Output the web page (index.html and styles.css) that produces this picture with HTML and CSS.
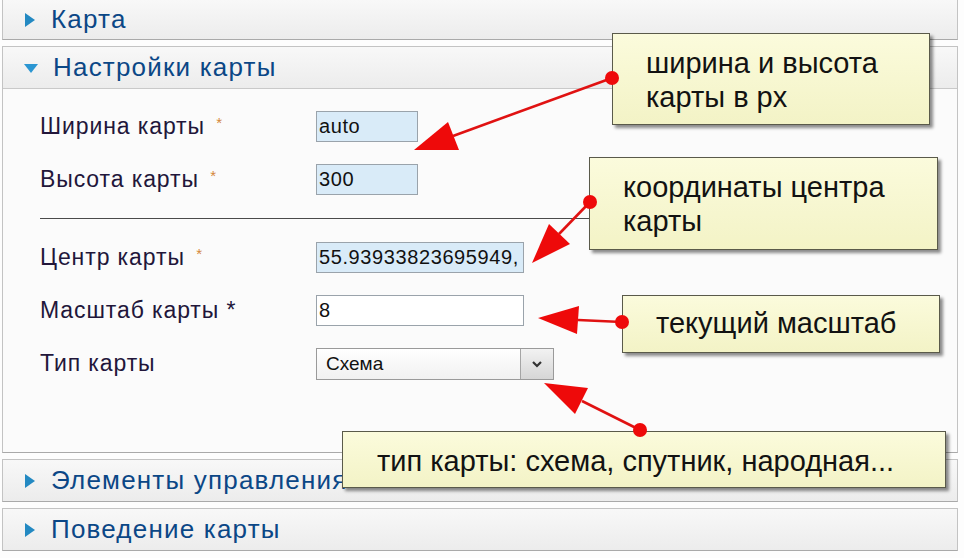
FILE: index.html
```html
<!DOCTYPE html>
<html lang="ru">
<head>
<meta charset="utf-8">
<title>Настройки карты</title>
<link rel="stylesheet" href="styles.css">
</head>
<body>
<div class="page">
  <section class="panel panel-first">
    <div class="panel-head">
      <svg class="tri" width="14" height="16" viewBox="0 0 14 16"><path d="M2 1 L12 8 L2 15 Z" fill="#2389c2"/></svg>
      <span class="panel-title">Карта</span>
    </div>
  </section>

  <section class="panel">
    <div class="panel-head">
      <svg class="tri" width="16" height="14" viewBox="0 0 16 14"><path d="M1 3 L15 3 L8 12 Z" fill="#2b96d2"/></svg>
      <span class="panel-title">Настройки карты</span>
    </div>
    <div class="panel-body">
      <div class="row">
        <span class="lbl">Ширина карты <span class="req">*</span></span>
        <span class="field short tinted">auto</span>
      </div>
      <div class="row">
        <span class="lbl">Высота карты <span class="req">*</span></span>
        <span class="field short tinted">300</span>
      </div>
      <div class="sep"></div>
      <div class="row">
        <span class="lbl">Центр карты <span class="req">*</span></span>
        <span class="field long tinted">55.93933823695949,</span>
      </div>
      <div class="row">
        <span class="lbl">Масштаб карты *</span>
        <span class="field long">8</span>
      </div>
      <div class="row">
        <span class="lbl">Тип карты</span>
        <span class="select">
          <span class="select-text">Схема</span>
          <span class="select-btn">
            <svg width="14" height="10" viewBox="0 0 14 10"><path d="M3 3 L7 7 L11 3" fill="none" stroke="#333" stroke-width="2.2"/></svg>
          </span>
        </span>
      </div>
    </div>
  </section>

  <section class="panel">
    <div class="panel-head">
      <svg class="tri" width="14" height="16" viewBox="0 0 14 16"><path d="M2 1 L12 8 L2 15 Z" fill="#2389c2"/></svg>
      <span class="panel-title">Элементы управления</span>
    </div>
  </section>

  <section class="panel">
    <div class="panel-head">
      <svg class="tri" width="14" height="16" viewBox="0 0 14 16"><path d="M2 1 L12 8 L2 15 Z" fill="#2389c2"/></svg>
      <span class="panel-title">Поведение карты</span>
    </div>
  </section>

  <div class="callout c1">ширина и высота<br>карты в px</div>
  <div class="callout c2">координаты центра<br>карты</div>
  <div class="callout c3">текущий масштаб</div>
  <div class="callout c4">тип карты: схема, спутник, народная...</div>

  <svg class="arrows" width="964" height="558" viewBox="0 0 964 558">
    <g stroke="#e01212" stroke-width="2.6" fill="none">
      <line x1="612" y1="78" x2="453" y2="136"/>
      <line x1="590" y1="202" x2="559" y2="234"/>
      <line x1="622" y1="322" x2="578" y2="320"/>
      <line x1="640" y1="430" x2="582" y2="401"/>
    </g>
    <g fill="#ee0a0a">
      <polygon points="414,150 459,150 448,122"/>
      <polygon points="532,263 570,244 549,224"/>
      <polygon points="538,318 577,334 579,306"/>
      <polygon points="544,383 575,414 588,388"/>
      <circle cx="612" cy="78" r="7"/>
      <circle cx="590" cy="202" r="7"/>
      <circle cx="622" cy="322" r="7"/>
      <circle cx="640" cy="430" r="7"/>
    </g>
  </svg>
</div>
</body>
</html>
```

FILE: styles.css
```css
* { box-sizing: border-box; }

html, body {
  margin: 0;
  padding: 0;
  background: #fdfdfd;
}

body {
  font-family: "Liberation Sans", Arial, sans-serif;
  width: 964px;
  height: 558px;
  overflow: hidden;
}

.page {
  position: relative;
  width: 964px;
  height: 558px;
  padding: 0 6px 0 2px;
  display: flex;
  flex-direction: column;
  gap: 6px;
}

.panel {
  border: 1px solid #c3c3c3;
  border-bottom-color: #a9a9a9;
  background: #fafafa;
}

.panel-first {
  margin-top: -1px;
}

.panel-head {
  height: 41px;
  display: flex;
  align-items: center;
  padding-left: 20px;
  gap: 14px;
  background: linear-gradient(#f8f8f8, #ececec);
}

.panel-first .panel-head {
  height: 39px;
}

.panel-head .tri {
  flex: none;
}

.panel-title {
  font-size: 26px;
  letter-spacing: 1.2px;
  color: #0b4786;
}

.panel-body {
  border-top: 1px solid #c9c9c9;
  background: #fbfbfb;
  padding: 22px 0 73px 37px;
  display: flex;
  flex-direction: column;
  gap: 22px;
}

.row {
  display: flex;
  align-items: center;
  height: 31px;
}

.lbl {
  width: 276px;
  flex: none;
  font-size: 23px;
  letter-spacing: 0.9px;
  color: #22163a;
}

.req {
  color: #d4873a;
  font-size: 15px;
  vertical-align: 6px;
  margin-left: 4px;
}

.field {
  height: 31px;
  border: 1px solid #9aa3ab;
  background: #ffffff;
  font-size: 20px;
  letter-spacing: 0.6px;
  color: #111;
  display: flex;
  align-items: center;
  padding-left: 2px;
  overflow: hidden;
  white-space: nowrap;
}

.field.short { width: 102px; }
.field.long { width: 208px; }
.field.tinted { background: #d9ebf8; }

.sep {
  width: 560px;
  height: 1px;
  background: #4a4a4a;
  margin: 1px 0;
}

.select {
  width: 238px;
  height: 32px;
  border: 1px solid #9a9a9a;
  background: linear-gradient(#ffffff, #f1f1f1);
  display: flex;
  align-items: stretch;
}

.select-text {
  flex: 1;
  display: flex;
  align-items: center;
  padding-left: 9px;
  font-size: 19px;
  color: #111;
}

.select-btn {
  width: 33px;
  border-left: 1px solid #a5a5a5;
  background: linear-gradient(#f2f2f2, #d6d6d6);
  display: flex;
  align-items: center;
  justify-content: center;
}

.callout {
  position: absolute;
  border: 1px solid #5a5a4a;
  background: linear-gradient(#fbfbdc, #f3f3c6);
  box-shadow: 3px 3px 3px rgba(0, 0, 0, 0.45);
  font-size: 29px;
  line-height: 34px;
  color: #121212;
  padding: 12px 10px 10px 33px;
  white-space: nowrap;
}

.c1 { left: 612px; top: 33px; width: 318px; height: 92px; }
.c2 { left: 589px; top: 157px; width: 349px; height: 93px; }
.c3 { left: 622px; top: 295px; width: 318px; height: 58px; padding-top: 10px; }
.c4 { left: 342px; top: 431px; width: 604px; height: 57px; padding-left: 34px; }

.arrows {
  position: absolute;
  left: 0;
  top: 0;
  pointer-events: none;
}
```
